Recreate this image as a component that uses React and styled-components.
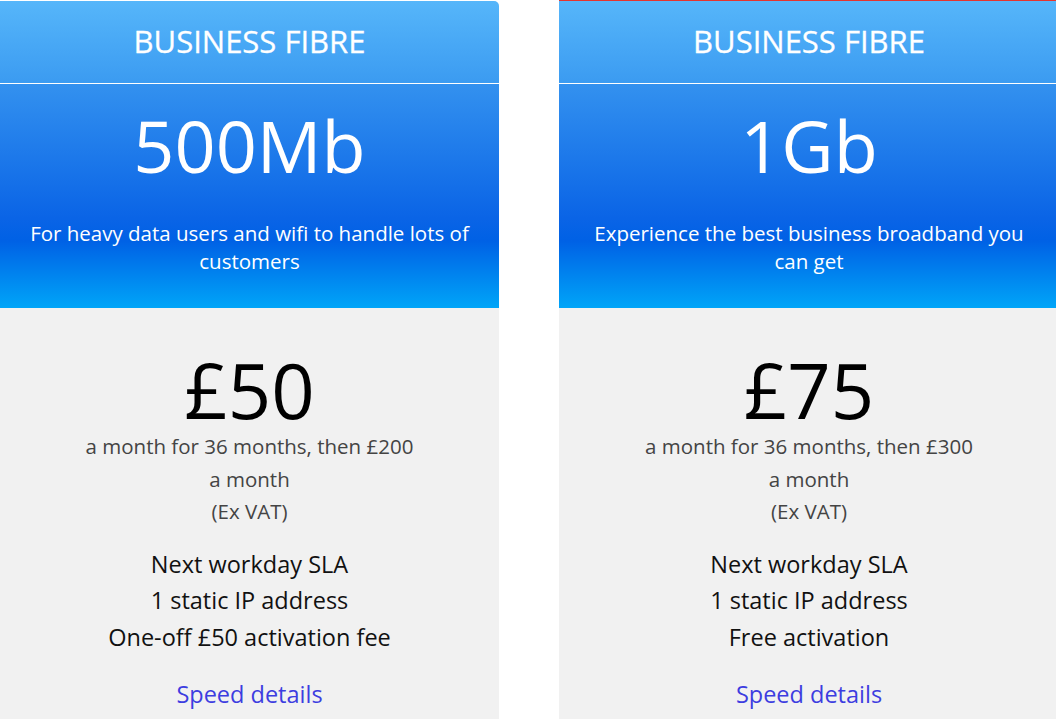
import React from "react";
import styled, { createGlobalStyle } from "styled-components";

const Global = createGlobalStyle`
  html, body { margin: 0; padding: 0; background: #ffffff; }
  body { font-family: "Open Sans", "Lato", sans-serif; overflow: hidden; }
`;

const Row = styled.div`
  display: grid;
  grid-template-columns: 499px 499px;
  column-gap: 60px;
  width: 1056px;
  height: 719px;
  overflow: hidden;
`;

const Card = styled.div`
  display: flex;
  flex-direction: column;
  margin-top: ${(p) => (p.$selected ? "0" : "1px")};
  border-top: ${(p) => (p.$selected ? "1px solid #e5352f" : "none")};
  border-radius: ${(p) => (p.$selected ? "0" : "0 5px 0 0")};
  overflow: hidden;
  height: 760px;
  background: #f1f1f1;
  width: ${(p) => (p.$selected ? "500px" : "499px")};
`;

const Header = styled.div`
  height: 83px;
  display: flex;
  align-items: center;
  justify-content: center;
  padding-bottom: 2px;
  box-sizing: border-box;
  background: linear-gradient(#56b6fa, #3b9bf1);
  border-bottom: 1px solid #ffffff;
  color: #fff;
  font-size: 31px;
  font-weight: 500;
  -webkit-text-stroke: 0.3px #fff;
`;

const Speed = styled.div`
  height: 224px;
  box-sizing: border-box;
  padding-top: 18px;
  display: flex;
  flex-direction: column;
  align-items: center;
  background: linear-gradient(#3391ef 0%, #0a64e6 60%, #0061e5 70%, #00a5f8 100%);
  color: #fff;
  text-align: center;
`;

const SpeedValue = styled.div`
  font-size: 72px;
  line-height: 86px;
  font-weight: 500;
`;

const SpeedDesc = styled.div`
  margin-top: 31px;
  font-size: 20.5px;
  line-height: 28px;
  padding: 0 24px;
`;

const Body = styled.div`
  display: flex;
  flex-direction: column;
  align-items: center;
  text-align: center;
  padding-top: 42px;
`;

const Price = styled.div`
  font-size: 76px;
  line-height: 80px;
  color: #000;
  font-weight: 500;
`;

const Terms = styled.div`
  font-size: 20.5px;
  line-height: 32.5px;
  color: #444;
  max-width: 360px;
`;

const Features = styled.ul`
  list-style: none;
  margin: 18px 0 0;
  padding: 0;
  font-size: 23.5px;
  line-height: 36.5px;
  color: #111;
`;

const Link = styled.a`
  margin-top: 24px;
  font-size: 23.5px;
  line-height: 30px;
  color: #3d3de0;
  text-decoration: none;
`;

const plans = [
  {
    speed: "500Mb",
    desc: "For heavy data users and wifi to handle lots of customers",
    price: "£50",
    later: "£200",
    features: ["Next workday SLA", "1 static IP address", "One-off £50 activation fee"],
  },
  {
    speed: "1Gb",
    desc: "Experience the best business broadband you can get",
    price: "£75",
    later: "£300",
    features: ["Next workday SLA", "1 static IP address", "Free activation"],
    selected: true,
  },
];

export default function App() {
  return (
    <>
      <Global />
      <Row>
        {plans.map((p) => (
          <Card key={p.speed} $selected={p.selected}>
            <Header>BUSINESS FIBRE</Header>
            <Speed>
              <SpeedValue>{p.speed}</SpeedValue>
              <SpeedDesc>{p.desc}</SpeedDesc>
            </Speed>
            <Body>
              <Price>{p.price}</Price>
              <Terms>
                a month for 36 months, then {p.later}
                <br />
                a month
                <br />
                (Ex VAT)
              </Terms>
              <Features>
                {p.features.map((f) => (
                  <li key={f}>{f}</li>
                ))}
              </Features>
              <Link href="#">Speed details</Link>
            </Body>
          </Card>
        ))}
      </Row>
    </>
  );
}
